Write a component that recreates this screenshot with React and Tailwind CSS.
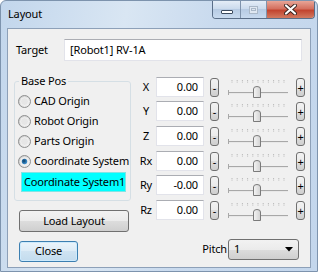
import React from "react";

function Radio({ checked }) {
  return (
    <svg width="13" height="13" viewBox="0 0 13 13" className="shrink-0">
      <defs>
        <linearGradient id="rgo" x1="0" y1="0" x2="1" y2="1">
          <stop offset="0" stopColor="#c9c9c9" />
          <stop offset="1" stopColor="#f7f7f7" />
        </linearGradient>
        <radialGradient id="rgd" cx="0.4" cy="0.4" r="0.6">
          <stop offset="0" stopColor="#0b3d66" />
          <stop offset="1" stopColor="#3f93d2" />
        </radialGradient>
      </defs>
      <circle cx="6.5" cy="6.5" r="6" fill="url(#rgo)" stroke="#8e8f8f" />
      <circle cx="6.5" cy="6.5" r="4" fill="#e6e6e6" stroke="#f4f4f4" strokeWidth="0.8" />
      {checked && <circle cx="6.5" cy="6.5" r="2.7" fill="url(#rgd)" />}
    </svg>
  );
}

function Slider() {
  const ticks = Array.from({ length: 11 }, (_, i) => 13 + i * 5.2);
  return (
    <svg width="77" height="22" viewBox="0 0 77 22" className="shrink-0 overflow-visible">
      {ticks.map((x, i) => (
        <line key={i} x1={x} y1="4" x2={x} y2="7" stroke="#b9b9b9" strokeWidth="1" strokeDasharray="1 0.6" />
      ))}
      <line x1="9" y1="16.5" x2="69" y2="16.5" stroke="#a8a8a8" strokeWidth="1" />
      <line x1="9" y1="17.5" x2="69" y2="17.5" stroke="#e8e8e8" strokeWidth="1" />
      <line x1="9.5" y1="14" x2="9.5" y2="19" stroke="#a8a8a8" strokeWidth="1" />
      <defs>
        <linearGradient id="thg" x1="0" y1="0" x2="1" y2="0">
          <stop offset="0" stopColor="#f5f5f5" />
          <stop offset="1" stopColor="#d2d2d2" />
        </linearGradient>
      </defs>
      <path d="M34.5 21.5 V13 Q34.5 10.5 38 10.5 Q41.5 10.5 41.5 13 V21.5 Z" fill="url(#thg)" stroke="#7a7a7a" strokeWidth="1" />
    </svg>
  );
}

function SmallBtn({ children }) {
  return (
    <div className="w-[9px] h-[19px] shrink-0 rounded-[3px] border border-[#707070] bg-[linear-gradient(#f2f2f2_0%,#ebebeb_50%,#dddddd_50%,#cfcfcf_100%)] flex items-center justify-center text-[11px] leading-none text-black">
      {children}
    </div>
  );
}

export default function App() {
  const rows = [
    { label: "X", value: "0.00", mt: "mt-0" },
    { label: "Y", value: "0.00", mt: "mt-[4px]" },
    { label: "Z", value: "0.00", mt: "mt-[5px]" },
    { label: "Rx", value: "0.00", mt: "mt-[5px]" },
    { label: "Ry", value: "-0.00", mt: "mt-[4px]" },
    { label: "Rz", value: "0.00", mt: "mt-[5px]" },
  ];
  const radios = ["CAD Origin", "Robot Origin", "Parts Origin", "Coordinate System"];

  return (
    <div className="w-[318px] h-[272px] overflow-hidden flex flex-col font-['Noto_Sans',sans-serif] text-[11px] tracking-[-0.15px] text-black rounded-t-[6px] border border-[#7d93ad] bg-[linear-gradient(100deg,#c2d6ec_0%,#d9e6f3_35%,#c9daee_60%,#c3d6ec_100%)]">
      {/* title bar */}
      <div className="h-[27px] flex items-start shrink-0">
        <div className="pl-[7px] pt-[5px] text-black">Layout</div>
        <div className="ml-auto mr-[2px] flex h-[18px] rounded-b-[4px] border border-t-0 border-[#5a6e88] overflow-hidden">
          <div className="w-[28px] h-full flex items-center justify-center bg-[linear-gradient(#e4edf7,#c9d9ec_50%,#b7cbe3_50%,#c8daef)] border-r border-[#7f93ac]">
            <div className="mt-[5px] w-[12px] h-[4px] bg-white border border-[#3b4a5e] rounded-[1px]" />
          </div>
          <div className="w-[26px] h-full flex items-center justify-center bg-[linear-gradient(#e4edf7,#c9d9ec_50%,#b7cbe3_50%,#c8daef)] border-r border-[#7f93ac]">
            <div className="w-[9px] h-[8px] border border-[#aab8c8] bg-[#dfe7f1] flex items-center justify-center">
              <div className="w-[5px] h-[3px] border border-[#aab8c8]" />
            </div>
          </div>
          <div className="w-[47px] h-full flex items-center justify-center bg-[linear-gradient(#e8a597,#d4705f_45%,#c2442f_55%,#d27a60)]">
            <svg width="13" height="11" viewBox="0 0 13 11">
              <path d="M2 1.5 L11 9.5 M11 1.5 L2 9.5" stroke="#3a2420" strokeWidth="4" strokeLinecap="round" />
              <path d="M2 1.5 L11 9.5 M11 1.5 L2 9.5" stroke="#ffffff" strokeWidth="2.2" strokeLinecap="round" />
            </svg>
          </div>
        </div>
      </div>

      {/* client area */}
      <div className="mx-[6px] mb-[3px] flex-1 border border-[#8da0b8] bg-[#f0f0f0] flex flex-col">
        {/* target row */}
        <div className="mt-[10px] flex items-center">
          <div className="w-[56px] pl-[8px]">Target</div>
          <div className="w-[238px] h-[22px] bg-white border border-[#e2e3ea] border-t-[#abadb3] flex items-center pl-[5px]">
            [Robot1] RV-1A
          </div>
        </div>

        <div className="mt-[12px] flex">
          {/* left column */}
          <div className="ml-[6px] w-[117px] flex flex-col">
            <fieldset className="border border-[#d5dfe5] rounded-[3px] pb-[8px]">
              <legend className="ml-[4px] px-[2px] leading-[16px]">Base Pos</legend>
              <div className="mt-[2px] flex flex-col">
                {radios.map((r, i) => (
                  <div key={r} className="h-[20px] flex items-center pl-[3px] gap-[3px] whitespace-nowrap">
                    <Radio checked={i === 3} />
                    <span>{r}</span>
                  </div>
                ))}
              </div>
              <div className="mt-[1px] ml-[6px] w-[105px] h-[20px] bg-[#00ffff] border border-[#7fe5e5] overflow-hidden whitespace-nowrap flex items-center pl-[2px]">
                Coordinate System1@
              </div>
            </fieldset>
            <div className="mt-[9px] ml-[5px] w-[110px] h-[22px] rounded-[3px] border border-[#707070] bg-[linear-gradient(#f2f2f2_0%,#ebebeb_50%,#dddddd_50%,#cfcfcf_100%)] flex items-center justify-center">
              Load Layout
            </div>
            <div className="mt-[9px] ml-[5px] w-[59px] h-[21px] rounded-[3px] border border-[#3c7fb1] shadow-[inset_0_0_0_1px_#cdeafc] bg-[linear-gradient(#eaf4fb_0%,#dcebf6_50%,#cfe3f2_50%,#c3dcee_100%)] flex items-center justify-center">
              Close
            </div>
          </div>

          {/* right column */}
          <div className="ml-[5px] mt-[4px] flex flex-col">
            {rows.map((r) => (
              <div key={r.label} className={`${r.mt} h-[20px] flex items-center`}>
                <div className="w-[20px] text-center">{r.label}</div>
                <div className="w-[48px] h-[20px] bg-white border border-[#e2e3ea] border-t-[#abadb3] flex items-center justify-end pr-[5px]">
                  {r.value}
                </div>
                <div className="ml-[6px]">
                  <SmallBtn>-</SmallBtn>
                </div>
                <Slider />
                <SmallBtn>+</SmallBtn>
              </div>
            ))}
            <div className="mt-[19px] flex items-center justify-end pr-[6px]">
              <span className="mr-[1px]">Pitch</span>
              <div className="w-[71px] h-[21px] rounded-[3px] border border-[#707070] bg-[linear-gradient(#f2f2f2_0%,#ebebeb_50%,#dddddd_50%,#cfcfcf_100%)] flex items-center pl-[5px] pr-[5px]">
                <span>1</span>
                <svg width="8" height="5" viewBox="0 0 8 5" className="ml-auto">
                  <path d="M0 0 H8 L4 4.5 Z" fill="#000" />
                </svg>
              </div>
            </div>
          </div>
        </div>
      </div>
    </div>
  );
}
